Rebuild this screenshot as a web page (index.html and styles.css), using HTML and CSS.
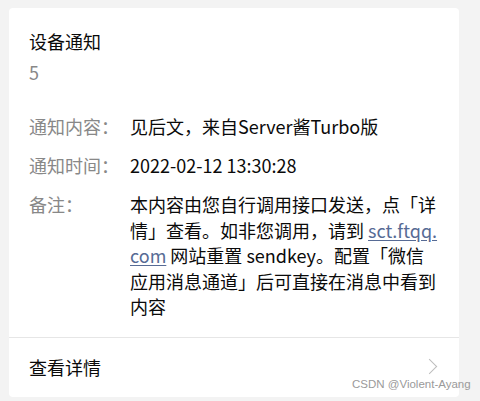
FILE: index.html
```html
<!DOCTYPE html>
<html lang="zh-CN">
<head>
    <meta charset="UTF-8">
    <meta name="viewport" content="width=device-width, initial-scale=1.0">
    <title>设备通知</title>
    <link rel="stylesheet" href="styles.css">
</head>
<body>

    <!-- Notification card -->
    <div class="card">
        <div class="card-head">
            <div class="title">设备通知</div>
            <div class="count">5</div>
        </div>

        <div class="rows">
            <div class="row">
                <span class="label">通知内容：</span>
                <span class="value">见后文，来自Server酱Turbo版</span>
            </div>
            <div class="row">
                <span class="label">通知时间：</span>
                <span class="value">2022-02-12 13:30:28</span>
            </div>
            <div class="row">
                <span class="label">备注：</span>
                <span class="value">本内容由您自行调用接口发送，点「详情」查看。如非您调用，请到 <a href="#">sct.ftqq.<wbr>com</a> 网站重置 sendkey。配置「微信<br>应用消息通道」后可直接在消息中看到<br>内容</span>
            </div>
        </div>

        <!-- Footer link -->
        <a class="more" href="#">
            <span>查看详情</span>
            <i class="arrow"></i>
        </a>
    </div>

    <div class="watermark">CSDN @Violent-Ayang</div>

</body>
</html>
```

FILE: styles.css
```css
body {
    margin: 0;
    padding: 8px 21px 4px 9px;
    background-color: #f3f3f3;
    font-family: "Noto Sans CJK SC", "Noto Sans", sans-serif;
    font-size: 18px;
    color: #0a0a0a;
    position: relative;
}

.card {
    background-color: #fff;
    border-radius: 4px;
}

.card-head {
    padding: 21px 20px 0;
}

.title {
    line-height: 24px;
}

.count {
    margin-top: 7px;
    line-height: 24px;
    color: #888;
}

/* Detail rows: label column + value column */
.rows {
    padding: 30px 16px 17px 20px;
    display: flex;
    flex-direction: column;
    gap: 13.5px;
}

.row {
    display: flex;
    line-height: 25.5px;
}

.label {
    flex: 0 0 101px;
    color: #888;
}

.value {
    flex: 1;
}

.value a {
    color: #576b95;
    text-underline-offset: 2px;
}

/* "查看详情" footer */
.more {
    display: flex;
    align-items: center;
    justify-content: space-between;
    padding: 17px 20px 18px;
    line-height: 24px;
    border-top: 1px solid #e6e6e6;
    color: #0a0a0a;
    text-decoration: none;
}

.arrow {
    width: 10px;
    height: 10px;
    margin-right: 4px;
    border-top: 1.5px solid #bdbdbd;
    border-right: 1.5px solid #bdbdbd;
    transform: rotate(45deg);
}

.watermark {
    position: absolute;
    left: 352px;
    top: 378px;
    font-family: "Liberation Sans", sans-serif;
    font-size: 11.5px;
    color: #9a9a9a;
}
```
